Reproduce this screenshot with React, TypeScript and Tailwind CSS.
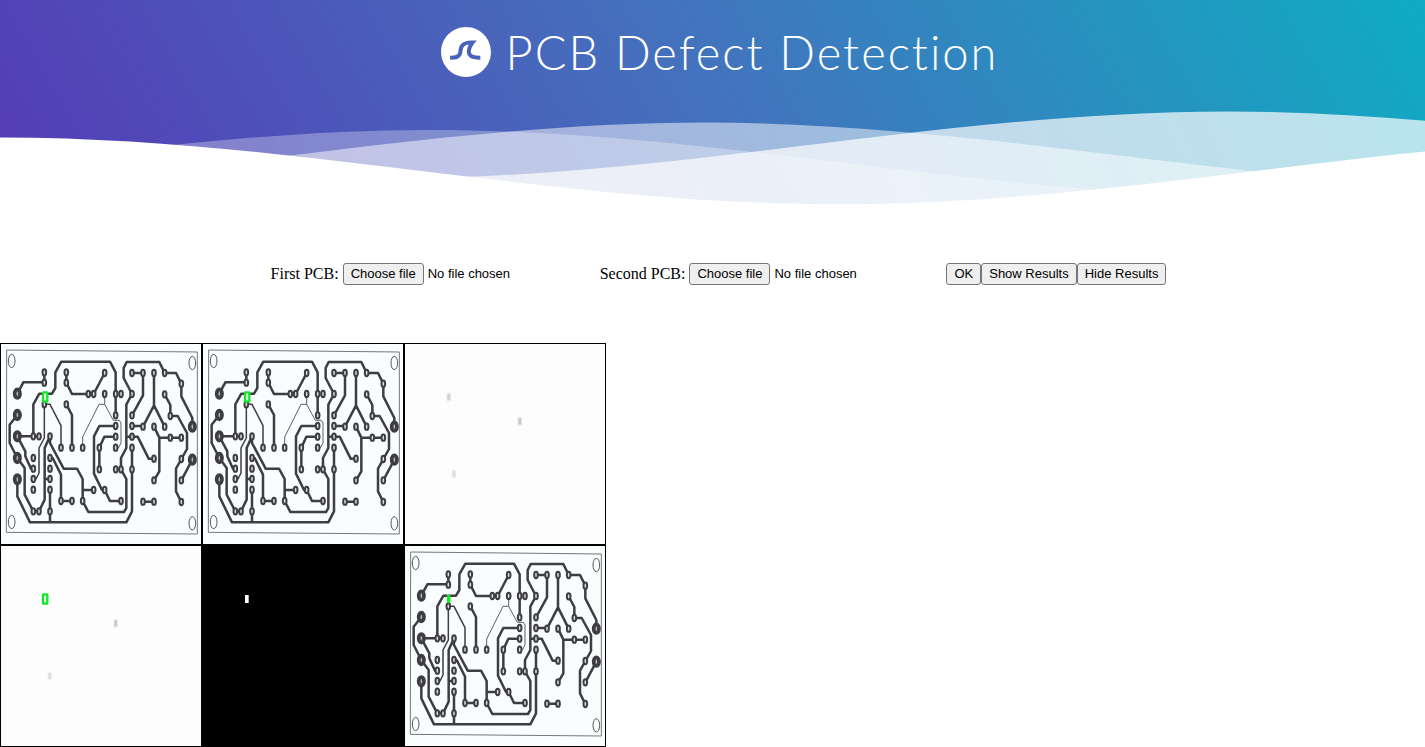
import { useState, type ReactNode } from "react";

const WAVE =
  "M-160 44c30 0 58-18 88-18s58 18 88 18 58-18 88-18 58 18 88 18v44h-352z";

const WAVES = [
  { x: 25.3, y: 0, opacity: 0.7 },
  { x: -29.8, y: 3, opacity: 0.5 },
  { x: 117.3, y: 5, opacity: 0.3 },
  { x: 72.2, y: 7, opacity: 1 },
];

const BIG_PADS = [
  [64, 152], [64, 216], [64, 280], [64, 345], [64, 409], [589, 251], [589, 350],
];

const PADS = [
  [145, 88], [145, 119], [211, 88], [211, 119], [326, 90], [277, 153], [293, 153],
  [326, 153], [359, 153], [375, 153], [408, 153], [408, 90], [441, 90], [474, 90],
  [506, 90], [556, 122], [506, 154], [145, 184], [211, 184], [359, 217], [408, 217],
  [359, 249], [408, 249], [441, 251], [474, 251], [506, 251], [523, 219], [112, 280],
  [129, 280], [162, 280], [359, 281], [408, 281], [523, 284], [556, 284], [195, 314],
  [228, 314], [260, 314], [310, 314], [359, 314], [408, 314], [112, 345], [162, 345],
  [112, 377], [162, 377], [310, 379], [359, 379], [375, 379], [408, 379], [474, 347],
  [556, 348], [112, 408], [162, 408], [112, 440], [162, 440], [293, 441], [326, 441],
  [474, 412], [556, 412], [195, 474], [228, 474], [260, 474], [375, 474], [441, 476],
  [474, 476], [556, 477], [112, 505], [129, 505], [162, 505],
];

const CORNERS = [
  [47, 54], [589, 60], [47, 537], [589, 541],
];

const THICK = [
  "M64 152L82 118H145V88",
  "M112 280V184L130 152H168L178 135V88L196 56H342L359 88V217",
  "M211 88V119L228 153H293L326 90",
  "M211 184L228 216V314",
  "M441 90V157L408 217M408 90H441",
  "M474 90V187L441 251M474 187L506 251",
  "M408 153L383 105V75L392 57H490L506 90H540L556 122V160L589 225V251",
  "M408 153L391 185V315L375 345V379L391 408V495L384 507H277L260 474",
  "M506 154L523 186V219H545L573 270V318L540 377V445L556 477",
  "M408 249H441",
  "M474 251L490 284H556M490 284V385L474 412",
  "M391 281H425L458 347H474",
  "M589 350L556 412",
  "M359 249H310L294 280V392L318 441H326L342 474H375",
  "M359 281H325L310 314V379H310",
  "M359 379H375",
  "M162 280V300L203 377H243L260 408V474M260 441H293",
  "M162 345H170L195 395V474H228",
  "M441 476H474",
  "M162 280L146 315V470L129 505H112M146 408H162",
  "M162 440V537",
  "M64 409V460L102 538H391L408 505V314",
  "M64 345L86 375V455L112 505",
  "M64 345L41 300V245L64 216",
  "M64 280H129M64 280L88 325V340L105 377H112",
];

const MEDIUM = [
  "M145 184V285L129 315V390L120 408H112",
  "M145 184H162L195 248V314",
];

const THIN = [
  "M326 153V184M260 314V282L309 184H326L352 232H370L375 240V300L368 314H359",
];

function Logo() {
  return (
    <svg viewBox="0 0 500 500" className="size-[50px] shrink-0" aria-hidden="true">
      <path
        fill="#fff"
        d="M250.4,0.8C112.7,0.8,1,112.4,1,250.2c0,137.7,111.7,249.4,249.4,249.4c137.7,0,249.4-111.7,249.4-249.4C499.8,112.4,388.1,0.8,250.4,0.8z M383.8,326.3c-62,0-101.4-14.1-117.6-46.3c-17.1-34.1-2.3-75.4,13.2-104.1c-22.4,3-38.4,9.2-47.8,18.3c-11.2,10.9-13.6,26.7-16.3,45c-3.1,20.8-6.6,44.4-25.3,62.4c-19.8,19.1-51.6,26.9-100.2,24.6l1.8-39.7c35.9,1.6,59.7-2.9,70.8-13.6c8.9-8.6,11.1-22.9,13.5-39.6c6.3-42,14.8-99.4,141.4-99.4h41L333,166c-12.6,16-45.4,68.2-31.2,96.2c9.2,18.3,41.5,25.6,91.2,24.2l1.1,39.8C390.5,326.2,387.1,326.3,383.8,326.3z"
      />
    </svg>
  );
}

function Board({ children }: { children?: ReactNode }) {
  return (
    <>
      <rect x="15" y="3" width="600" height="600" fill="#fafdfe" />
      <g fill="none" stroke="#3e3d41" strokeLinejoin="round">
        <path d="M32 21L604 27V573L31 568Z" stroke="#77767a" strokeWidth="3" />
        <path d={THICK.join("")} strokeWidth="7.5" />
        <path d={MEDIUM.join("")} strokeWidth="4.5" />
        <path d={THIN.join("")} strokeWidth="2.5" />
      </g>
      {CORNERS.map(([x, y]) => (
        <ellipse key={`${x}-${y}`} cx={x} cy={y} rx="10" ry="20" fill="none" stroke="#57565a" strokeWidth="3" />
      ))}
      {PADS.map(([x, y]) => (
        <ellipse key={`${x}-${y}`} cx={x} cy={y} rx="5.5" ry="9.5" fill="#d9dbdc" stroke="#3e3d41" strokeWidth="6" />
      ))}
      {BIG_PADS.map(([x, y]) => (
        <ellipse key={`${x}-${y}`} cx={x} cy={y} rx="8" ry="13" fill="#b5b6b8" stroke="#3e3d41" strokeWidth="11" />
      ))}
      {children}
    </>
  );
}

function Smudge({ x, y, color }: { x: number; y: number; color: string }) {
  return (
    <g fill={color}>
      <rect x={x - 6} y={y - 13} width="12" height="26" opacity="0.4" />
      <rect x={x - 4} y={y - 9} width="9" height="18" />
    </g>
  );
}

function Tile({ label, children }: { label: string; children: ReactNode }) {
  return (
    <svg
      viewBox="15 3 600 600"
      role="img"
      aria-label={label}
      className="block size-[202px] border border-black"
    >
      {children}
    </svg>
  );
}

function Outline() {
  return (
    <rect x="141" y="148" width="13" height="28" rx="1" fill="#e3f3e3" stroke="#15e62b" strokeWidth="7" />
  );
}

function FilePicker({ id, label }: { id: string; label: string }) {
  const [name, setName] = useState("No file chosen");
  return (
    <div className="flex items-center gap-1">
      <label htmlFor={id}>{label}</label>
      <div className="relative flex w-[253px] items-center gap-1 font-['Liberation_Sans',Arial,sans-serif] text-[13px]">
        <span className="rounded-[3px] border border-[#767676] bg-[#efefef] px-[7px] leading-5">
          Choose file
        </span>
        <span>{name}</span>
        <input
          id={id}
          type="file"
          onChange={(e) => setName(e.target.files?.[0]?.name ?? "No file chosen")}
          className="absolute inset-0 opacity-0"
        />
      </div>
    </div>
  );
}

function Button({ children, onClick }: { children: ReactNode; onClick?: () => void }) {
  return (
    <button
      type="button"
      onClick={onClick}
      className="rounded-[3px] border border-[#767676] bg-[#efefef] px-[7px] font-['Liberation_Sans',Arial,sans-serif] text-[13px] leading-5"
    >
      {children}
    </button>
  );
}

export default function App() {
  const [shown, setShown] = useState(true);
  return (
    <div className="bg-white font-['Liberation_Serif','Times_New_Roman',serif] text-base text-black">
      <header className="bg-[linear-gradient(60deg,#553ab6_0%,#4472bd_50%,#0facc2_100%)] text-white">
        <div className="flex h-[104px] items-center justify-center gap-[15px] pl-[14px]">
          <Logo />
          <h1 className="font-['Lato',sans-serif] text-[47px] font-light tracking-[2px]">
            PCB Defect Detection
          </h1>
        </div>
        <svg
          viewBox="0 24 150 28"
          preserveAspectRatio="none"
          className="block h-[104px] w-full"
          aria-hidden="true"
        >
          {WAVES.map((w) => (
            <path
              key={w.y}
              d={WAVE}
              transform={`translate(${w.x} ${w.y})`}
              fill="#fff"
              fillOpacity={w.opacity}
            />
          ))}
        </svg>
      </header>

      <main>
        <form className="flex items-center justify-center gap-1 pt-[54px] pb-[57px] pl-[12px]">
          <FilePicker id="first-pcb" label="First PCB:" />
          <FilePicker id="second-pcb" label="Second PCB:" />
          <div className="flex">
            <Button>OK</Button>
            <Button onClick={() => setShown(true)}>Show Results</Button>
            <Button onClick={() => setShown(false)}>Hide Results</Button>
          </div>
        </form>

        {shown && (
          <section className="grid w-fit grid-cols-3" aria-label="Results">
            <Tile label="First board">
              <Board>
                <Outline />
              </Board>
            </Tile>
            <Tile label="Second board">
              <Board>
                <Outline />
              </Board>
            </Tile>
            <Tile label="Difference">
              <rect x="15" y="3" width="600" height="600" fill="#fdfdfd" />
              <Smudge x={146} y={162} color="#d4d4d4" />
              <Smudge x={359} y={235} color="#cbcbcb" />
              <Smudge x={161} y={393} color="#dedede" />
            </Tile>
            <Tile label="Marked difference">
              <rect x="15" y="3" width="600" height="600" fill="#fdfdfd" />
              <Outline />
              <Smudge x={359} y={235} color="#cbcbcb" />
              <Smudge x={161} y={393} color="#dedede" />
            </Tile>
            <Tile label="Threshold">
              <rect x="15" y="3" width="600" height="600" fill="#000" />
              <rect x="141" y="150" width="11" height="24" fill="#fff" />
            </Tile>
            <Tile label="Filled defects">
              <Board>
                <rect x="141" y="150" width="10" height="24" fill="#00f614" />
              </Board>
            </Tile>
          </section>
        )}
      </main>
    </div>
  );
}
